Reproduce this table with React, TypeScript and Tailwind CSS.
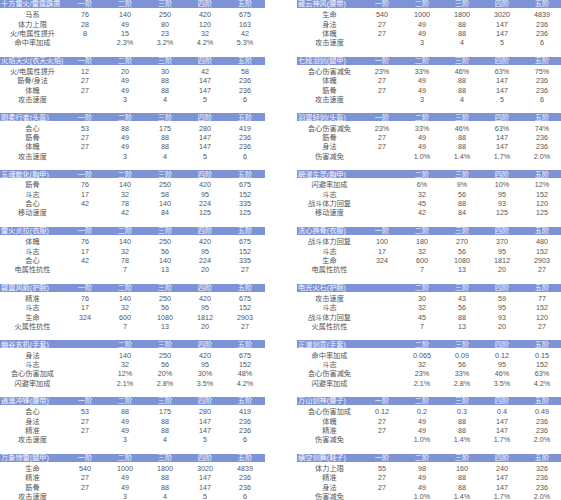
import React from 'react'

type Row = [string, string, string, string, string, string]

interface Block {
    title: string
    noFirst?: boolean
    rows: Row[]
}

const left: Block[] = [
    {
        title: '十方雷火/雷霆霹雳',
        rows: [
            ['马系', '76', '140', '250', '420', '675'],
            ['体力上限', '28', '49', '80', '120', '163'],
            ['火/电属性提升', '8', '15', '23', '32', '42'],
            ['命中率加成', '', '2.3%', '3.2%', '4.2%', '5.3%'],
        ],
    },
    {
        title: '火焰天火(衣天火焰)',
        rows: [
            ['火/电属性提升', '12', '20', '30', '42', '58'],
            ['筋骨/身法', '27', '49', '88', '147', '236'],
            ['体魄', '27', '49', '88', '147', '236'],
            ['攻击速度', '', '3', '4', '5', '6'],
        ],
    },
    {
        title: '刚柔行者(头盔)',
        rows: [
            ['会心', '53', '88', '175', '280', '419'],
            ['筋骨', '27', '49', '88', '147', '236'],
            ['体魄', '27', '49', '88', '147', '236'],
            ['攻击速度', '', '3', '4', '5', '6'],
        ],
    },
    {
        title: '五魂散化(胸甲)',
        rows: [
            ['筋骨', '76', '140', '250', '420', '675'],
            ['斗志', '17', '32', '58', '95', '152'],
            ['会心', '42', '78', '140', '224', '335'],
            ['移动速度', '', '42', '84', '125', '125'],
        ],
    },
    {
        title: '雷火炎拉(衣服)',
        rows: [
            ['体魄', '76', '140', '250', '420', '675'],
            ['斗志', '17', '32', '56', '95', '152'],
            ['会心', '42', '78', '140', '224', '335'],
            ['电属性抗性', '', '7', '13', '20', '27'],
        ],
    },
    {
        title: '碧翼风箭(护腕)',
        rows: [
            ['精准', '76', '140', '250', '420', '675'],
            ['斗志', '17', '32', '56', '95', '152'],
            ['生命', '324', '600', '1080', '1812', '2903'],
            ['火属性抗性', '', '7', '13', '20', '27'],
        ],
    },
    {
        title: '幽谷玄机(手套)',
        noFirst: true,
        rows: [
            ['身法', '', '140', '250', '420', '675'],
            ['斗志', '', '32', '56', '95', '152'],
            ['会心伤害加成', '', '12%', '20%', '30%', '48%'],
            ['闪避率加成', '', '2.1%', '2.8%', '3.5%', '4.2%'],
        ],
    },
    {
        title: '逍遥冲锋(腰带)',
        rows: [
            ['会心', '53', '88', '175', '280', '419'],
            ['身法', '27', '49', '88', '147', '236'],
            ['精准', '27', '49', '88', '147', '236'],
            ['攻击速度', '', '3', '4', '5', '6'],
        ],
    },
    {
        title: '万象惊雷(腿甲)',
        rows: [
            ['生命', '540', '1000', '1800', '3020', '4839'],
            ['精准', '27', '49', '88', '147', '236'],
            ['筋骨', '27', '49', '88', '147', '236'],
            ['攻击速度', '', '3', '4', '5', '6'],
        ],
    },
]

const right: Block[] = [
    {
        title: '藏云神风(腰带)',
        rows: [
            ['生命', '540', '1000', '1800', '3020', '4839'],
            ['身法', '27', '49', '88', '147', '236'],
            ['体魄', '27', '49', '88', '147', '236'],
            ['攻击速度', '', '3', '4', '5', '6'],
        ],
    },
    {
        title: '七段泪剑(腿甲)',
        rows: [
            ['会心伤害减免', '23%', '33%', '46%', '63%', '75%'],
            ['体魄', '27', '49', '88', '147', '236'],
            ['筋骨', '27', '49', '88', '147', '236'],
            ['攻击速度', '', '3', '4', '5', '6'],
        ],
    },
    {
        title: '羽翼轻剑(头盔)',
        rows: [
            ['会心伤害减免', '23%', '33%', '46%', '63%', '74%'],
            ['筋骨', '27', '49', '88', '147', '236'],
            ['身法', '27', '49', '88', '147', '236'],
            ['伤害减免', '', '1.0%', '1.4%', '1.7%', '2.0%'],
        ],
    },
    {
        title: '瞬漫生灵(胸甲)',
        noFirst: true,
        rows: [
            ['闪避率加成', '', '6%', '9%', '10%', '12%'],
            ['斗志', '', '32', '56', '95', '152'],
            ['战斗体力回复', '', '45', '88', '93', '120'],
            ['移动速度', '', '42', '84', '125', '125'],
        ],
    },
    {
        title: '洗心换骨(衣服)',
        rows: [
            ['战斗体力回复', '100', '180', '270', '370', '480'],
            ['斗志', '17', '32', '56', '95', '152'],
            ['生命', '324', '600', '1080', '1812', '2903'],
            ['电属性抗性', '', '7', '13', '20', '27'],
        ],
    },
    {
        title: '电光火石(护腕)',
        noFirst: true,
        rows: [
            ['攻击速度', '', '30', '43', '59', '77'],
            ['斗志', '', '32', '56', '95', '152'],
            ['战斗体力回复', '', '45', '88', '93', '120'],
            ['火属性抗性', '', '7', '13', '20', '27'],
        ],
    },
    {
        title: '正道剑意(手套)',
        noFirst: true,
        rows: [
            ['命中率加成', '', '0.065', '0.09', '0.12', '0.15'],
            ['斗志', '', '32', '56', '95', '152'],
            ['会心伤害减免', '', '23%', '33%', '46%', '63%'],
            ['闪避率加成', '', '2.1%', '2.8%', '3.5%', '4.2%'],
        ],
    },
    {
        title: '万山剑神(腰子)',
        rows: [
            ['会心伤害加成', '0.12', '0.2', '0.3', '0.4', '0.49'],
            ['体魄', '27', '49', '88', '147', '236'],
            ['精准', '27', '49', '88', '147', '236'],
            ['伤害减免', '', '1.0%', '1.4%', '1.7%', '2.0%'],
        ],
    },
    {
        title: '横空剑舞(鞋子)',
        rows: [
            ['体力上限', '55', '98', '160', '240', '326'],
            ['精准', '27', '49', '88', '147', '236'],
            ['身法', '27', '49', '88', '147', '236'],
            ['伤害减免', '', '1.0%', '1.4%', '1.7%', '2.0%'],
        ],
    },
]

const stages = ['一阶', '二阶', '三阶', '四阶', '五阶']

const cols = 'grid grid-cols-[65px_repeat(5,40px)] items-center'

function StatBlock({ block }: { block: Block }) {
    return (
        <div className="mb-[9.1px]">
            <div className={`${cols} h-[8px] bg-[#7d93d6] text-[#f4f6fc] leading-none`}>
                <div className="pl-[1px] whitespace-nowrap">{block.title}</div>
                {stages.map((s, i) => (
                    <div key={s} className="text-center">
                        {block.noFirst && i === 0 ? '' : s}
                    </div>
                ))}
            </div>
            <div className="mt-[2.3px]">
                {block.rows.map((row) => (
                    <div key={row[0]} className={`${cols} h-[9.33px] leading-none text-[#555]`}>
                        {row.map((cell, i) => (
                            <div key={i} className="text-center whitespace-nowrap">
                                {cell}
                            </div>
                        ))}
                    </div>
                ))}
            </div>
        </div>
    )
}

export default function App() {
    return (
        <div
            className="w-[561px] h-[500px] overflow-hidden bg-white flex gap-[32px] text-[7.2px]"
            style={{ fontFamily: '"Liberation Sans", "Noto Sans CJK SC", sans-serif' }}
        >
            <div className="w-[265px] shrink-0">
                {left.map((b) => (
                    <StatBlock key={b.title} block={b} />
                ))}
            </div>
            <div className="w-[265px] shrink-0">
                {right.map((b) => (
                    <StatBlock key={b.title} block={b} />
                ))}
            </div>
        </div>
    )
}
